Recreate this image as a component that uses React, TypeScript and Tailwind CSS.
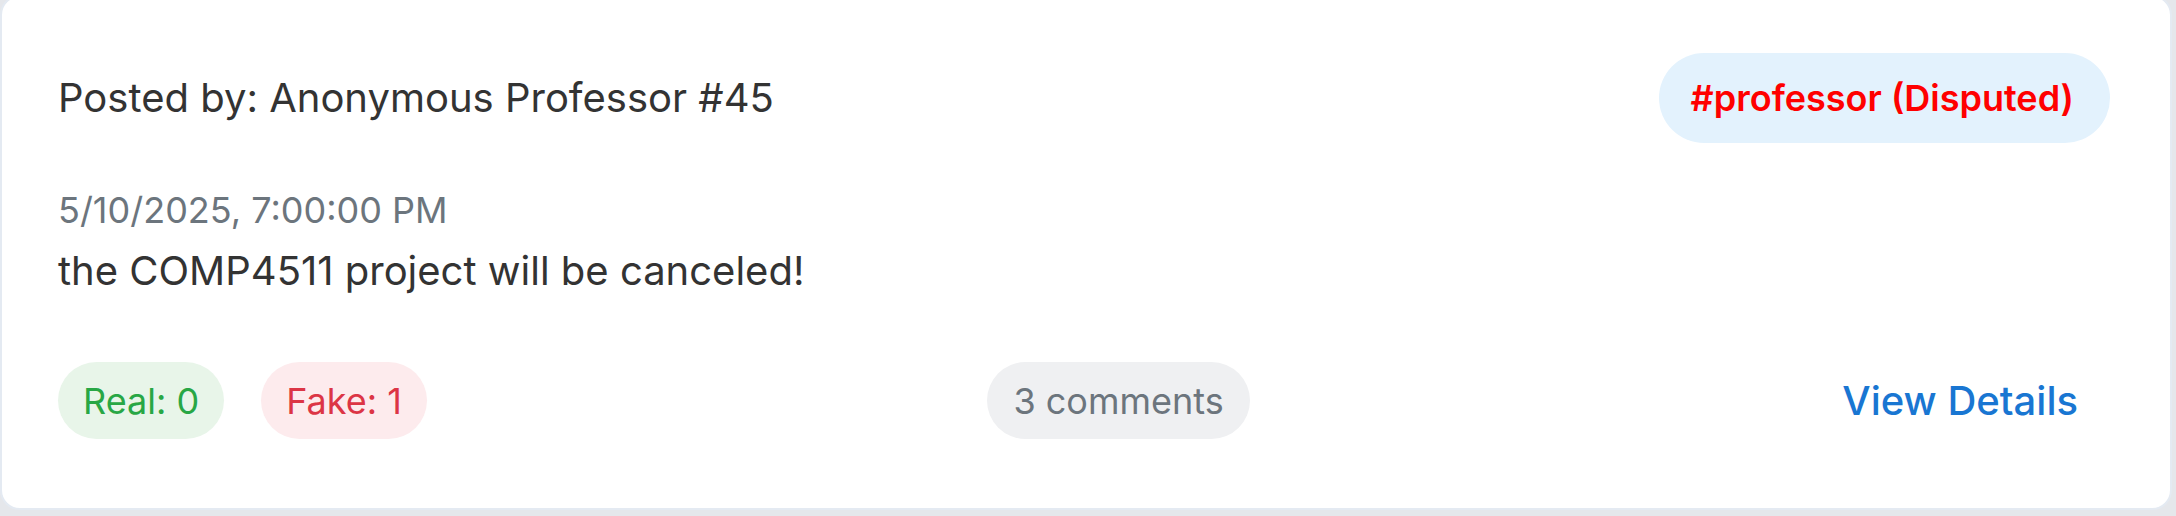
import React from "react";

const post = {
  author: "Anonymous Professor #45",
  tag: "#professor (Disputed)",
  date: "5/10/2025, 7:00:00 PM",
  content: "the COMP4511 project will be canceled!",
  real: 0,
  fake: 1,
  comments: 3,
};

const PostCard = () => {
  return (
    <div className="mt-[-5px] mr-[4px] rounded-[20px] border-2 border-[#e4eaf2] bg-white pl-[56px] pr-[60px] pt-[56px] pb-[69px] text-[#333333]">
      <div className="flex h-[90px] items-center justify-between">
        <span className="text-[40px] leading-[58px]">Posted by: {post.author}</span>
        <span className="flex h-[90px] items-center rounded-full bg-[#e3f2fd] pl-[32px] pr-[36px] text-[36px] font-semibold text-[#ff0000]">
          {post.tag}
        </span>
      </div>

      <div className="mt-[42px] text-[36px] leading-[50px] text-[#6c757d]">{post.date}</div>
      <p className="mt-[7px] text-[40px] leading-[58px]">{post.content}</p>

      <div className="mt-[62px] flex h-[77px] items-center justify-between">
        <div className="flex items-center gap-[37px]">
          <span className="flex h-[77px] items-center rounded-full bg-[#e8f5e9] px-[25px] text-[36px] text-[#28a745]">
            Real: {post.real}
          </span>
          <span className="flex h-[77px] items-center rounded-full bg-[#fdebed] px-[25px] text-[36px] text-[#dc3545]">
            Fake: {post.fake}
          </span>
        </div>
        <span className="flex h-[77px] items-center rounded-full bg-[#eff0f2] px-[26px] text-[36px] text-[#6c757d]">
          {post.comments} comments
        </span>
        <button className="px-[32px] text-[40px] font-medium leading-[58px] text-[#1976d2]">
          View Details
        </button>
      </div>
    </div>
  );
};

export default function App() {
  return (
    <div className="min-h-[516px] overflow-hidden bg-[#e5e7eb] font-['Inter','Noto_Sans',sans-serif]">
      <PostCard />
    </div>
  );
}
